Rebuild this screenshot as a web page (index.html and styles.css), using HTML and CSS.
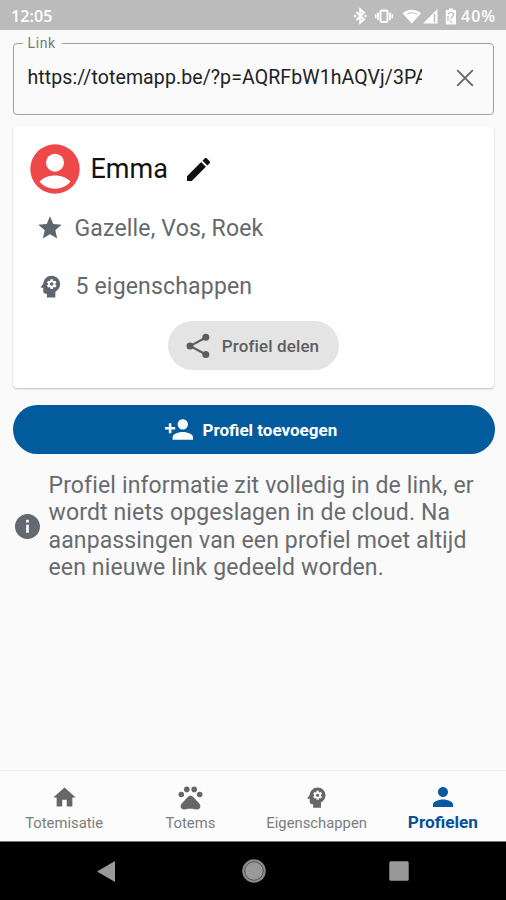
FILE: index.html
```html
<!DOCTYPE html>
<html lang="nl">
<head>
<meta charset="utf-8">
<title>Totemapp</title>
<link rel="stylesheet" href="styles.css">
</head>
<body>
<svg class="defs" aria-hidden="true">
  <symbol id="mind" viewBox="0 0 24 24"><path d="M13 8.57c-.79 0-1.43.64-1.43 1.43s.64 1.43 1.43 1.43 1.43-.64 1.43-1.43-.64-1.43-1.43-1.43z"/><path d="M13 3C9.25 3 6.2 5.94 6.02 9.64L4.1 12.2c-.25.33-.01.8.4.8H6v3c0 1.1.9 2 2 2h1v3h7v-4.68c2.36-1.12 4-3.53 4-6.32 0-3.87-3.13-7-7-7zm3 7c0 .13-.01.26-.02.39l.83.66c.08.06.1.16.05.25l-.8 1.39c-.05.09-.16.12-.24.09l-.99-.4c-.21.16-.43.29-.67.39L14 13.83c-.01.1-.1.17-.2.17h-1.6c-.1 0-.18-.07-.2-.17l-.15-1.06c-.25-.1-.47-.23-.68-.39l-.99.4c-.09.03-.2 0-.25-.09l-.8-1.39c-.05-.08-.03-.19.05-.25l.84-.66c-.01-.13-.02-.26-.02-.39s.02-.27.04-.39l-.85-.66c-.08-.06-.1-.16-.05-.26l.8-1.38c.05-.09.15-.12.24-.09l1 .4c.2-.15.43-.29.67-.39L12 6.17c.02-.1.1-.17.2-.17h1.6c.1 0 .18.07.2.17l.15 1.06c.24.1.46.23.67.39l1-.4c.09-.03.2 0 .24.09l.8 1.38c.05.09.03.2-.05.26l-.85.66c.03.12.04.25.04.39z"/></symbol>
</svg>
<header class="status">
  <span class="clock">12:05</span>
  <svg class="status-icons" viewBox="0 0 104 20" width="104" height="20">
    <path d="M3.500 6l7.500 7.500-3.800 3.200V3.300L11 6.500 3.500 14" fill="none" stroke="#fff" stroke-width="1.900"/>
    <circle cx="2" cy="10" r="1.300"/><circle cx="12.500" cy="10" r="1.300"/>
    <rect x="27.500" y="4.500" width="7" height="11.500" rx="1" fill="none" stroke="#fff" stroke-width="1.900"/>
    <path d="M25 6.500v7.500M37 6.500v7.500M22.700 8.300v4M39.300 8.300v4" stroke="#fff" stroke-width="1.700"/>
    <path d="M49.500 7.300C54.500 2.500 63 2.500 68 7.300L58.800 17.500z"/>
    <path d="M53.500 8.300c3-2 7.500-2 10.500 0" fill="none" stroke="#bbb" stroke-width="1"/>
    <path d="M70 17.500L84.500 3v14.500z"/><path d="M81.500 8v8.500" stroke="#bbb" stroke-width="1.500"/>
    <path d="M96 2.500h4V4h3v14.500H92.800V4H96z"/>
    <path d="M95.500 8.500c.3-3 5-3 5 0 0 2-2.300 2-2.500 4.500M98 14.500V17M95 10v5" fill="none" stroke="#bbb" stroke-width="1.200"/>
  </svg>
  <span class="battery">40%</span>
</header>
<main class="page">
  <fieldset class="link-field">
    <legend>Link</legend>
    <span class="url">https://totemapp.be/?p=AQRFbW1hAQVj/3PA</span>
    <svg class="clear" viewBox="0 0 18 18" width="18" height="18"><path d="M1.200 1.200l15.600 15.600M16.800 1.200L1.200 16.800" fill="none" stroke="#686868" stroke-width="1.900"/></svg>
  </fieldset>
  <section class="card">
    <div class="person">
      <svg viewBox="0 0 50 50" width="50" height="50"><circle cx="25" cy="25" r="24.700" fill="#ef484b"/><circle cx="25" cy="18.700" r="9" fill="#fff"/><path d="M9.700 37.500C17 29.500 33 29.500 40.300 37.500 34.500 47 15.500 47 9.700 37.500z" fill="#fff"/></svg>
      <h1>Emma</h1>
      <svg class="pencil" viewBox="3 3 18 18" width="23" height="23"><path d="M3 17.250V21h3.750L17.810 9.940l-3.750-3.750L3 17.250zM20.710 7.040c.39-.39.39-1.020 0-1.410l-2.340-2.340c-.39-.39-1.020-.39-1.410 0l-1.830 1.830 3.750 3.750 1.830-1.830z"/></svg>
    </div>
    <div class="fact">
      <svg viewBox="0 0 24 24" width="28" height="28"><path d="M12 17.270L18.180 21l-1.640-7.030L22 9.240l-7.190-.61L12 2 9.190 8.630 2 9.240l5.460 4.730L5.820 21z"/></svg>
      <span>Gazelle, Vos, Roek</span>
    </div>
    <div class="fact second">
      <svg viewBox="0 0 24 24" width="29" height="29"><use href="#mind"/></svg>
      <span>5 eigenschappen</span>
    </div>
    <button class="share">
      <svg viewBox="0 0 24 26" width="24" height="26"><path d="M20 4.500L4 13l16 8.500" fill="none" stroke="#5c5e60" stroke-width="2"/><circle cx="19.800" cy="4.300" r="3.500"/><circle cx="4" cy="13" r="3.500"/><circle cx="19.800" cy="21.600" r="3.500"/></svg>
      <span>Profiel delen</span>
    </button>
  </section>
  <button class="add">
    <svg viewBox="1 4 22 16" width="28" height="21"><path d="M15 12c2.210 0 4-1.790 4-4s-1.790-4-4-4-4 1.790-4 4 1.790 4 4 4zm-9-2V7H4v3H1v2h3v3h2v-3h3v-2H6zm9 4c-2.670 0-8 1.340-8 4v2h16v-2c0-2.660-5.330-4-8-4z"/></svg>
    <span>Profiel toevoegen</span>
  </button>
  <div class="info">
    <svg viewBox="2 2 20 20" width="25" height="25"><path d="M12 2C6.480 2 2 6.480 2 12s4.480 10 10 10 10-4.480 10-10S17.520 2 12 2zm1.100 15h-2.200v-6.500h2.200V17zm0-8.200h-2.200V6.600h2.200v2.200z"/></svg>
    <p>Profiel informatie zit volledig in de link, er<br>wordt niets opgeslagen in de cloud. Na<br>aanpassingen van een profiel moet altijd<br>een nieuwe link gedeeld worden.</p>
  </div>
</main>
<nav class="tabs">
  <a class="tab"><svg viewBox="0 0 24 24" width="27" height="27"><path d="M10 20v-6h4v6h5v-8h3L12 3 2 12h3v8z"/></svg><span>Totemisatie</span></a>
  <a class="tab"><svg viewBox="0 0 27 27" width="27" height="27"><circle cx="4.300" cy="10.500" r="2.800"/><circle cx="9.800" cy="5.400" r="2.800"/><circle cx="17.200" cy="5.400" r="2.800"/><circle cx="22.700" cy="10.500" r="2.800"/><path d="M10.700 13c1.800-2 3.800-2 5.600 0 1.700 2 3.700 4 5.600 6 2.900 3.100 1.200 6.700-2.300 6.500-2.100-.1-3.200-.7-6.100-.7s-4 .6-6.100.7c-3.500.2-5.200-3.400-2.300-6.500 1.900-2 3.900-4 5.600-6z"/></svg><span>Totems</span></a>
  <a class="tab"><svg viewBox="0 0 24 24" width="29" height="29"><use href="#mind"/></svg><span>Eigenschappen</span></a>
  <a class="tab active"><svg viewBox="4 4 16 16" width="20" height="20"><path d="M12 12c2.210 0 4-1.790 4-4s-1.790-4-4-4-4 1.790-4 4 1.790 4 4 4zm0 2c-2.670 0-8 1.340-8 4v2h16v-2c0-2.660-5.330-4-8-4z"/></svg><span>Profielen</span></a>
</nav>
<footer class="system">
  <svg viewBox="0 0 18 21" width="18" height="21"><path d="M18 0v21L0 10.500z"/></svg>
  <svg class="circle" viewBox="0 0 24 24" width="24" height="24"><circle cx="12" cy="12" r="11" fill="#999" stroke="#888" stroke-width="1.500"/><circle cx="12" cy="12" r="9.300" fill="none" stroke="#444" stroke-width=".9"/></svg>
  <svg viewBox="0 0 20 20" width="20" height="20"><rect x=".3" y=".3" width="19.400" height="19.400" rx="1.500"/></svg>
</footer>
</body>
</html>
```

FILE: styles.css
```css
* { box-sizing: border-box; }
body {
  margin: 0;
  width: 506px;
  height: 900px;
  display: flex;
  flex-direction: column;
  overflow: hidden;
  background: #fafafa;
  font-family: Roboto, sans-serif;
}
svg { display: block; flex: none; }
.defs { position: absolute; width: 0; height: 0; }
button { border: 0; font: inherit; }
span, legend, h1, p { white-space: nowrap; }

.status {
  height: 30px;
  flex: none;
  display: flex;
  align-items: center;
  padding: 2px 8px 0 11px;
  background: #bbb;
  color: #fff;
  font-family: "Open Sans", sans-serif;
  font-weight: 600;
}
.clock { font-size: 16px; letter-spacing: .1px; }
.status-icons { margin-left: auto; fill: #fff; }
.battery { width: 37px; margin-left: 4px; font-size: 16px; letter-spacing: 1px; }

.page { flex: 1; padding: 5px 12px 0 12.500px; }
.link-field {
  height: 79.500px;
  margin: 0;
  padding: 0 19px 9px 14px;
  border: 1px solid #a0a0a0;
  border-radius: 4px;
  display: flex;
  align-items: center;
  justify-content: space-between;
}
.link-field legend {
  margin-left: -5px;
  padding: 0 6px 0 5px;
  color: #777;
  font-size: 14px;
  line-height: 16px;
  letter-spacing: .6px;
}
.url {
  width: 394px;
  overflow: hidden;
  color: #222;
  font-size: 19.500px;
  line-height: 28px;
  letter-spacing: .1px;
}

.card {
  height: 262px;
  margin-top: 11.500px;
  padding: 18px 17px 0;
  border-radius: 4px;
  background: #fff;
  box-shadow: 0 1px 2px rgba(0, 0, 0, .24);
}
.person { display: flex; align-items: center; height: 50px; }
.person h1 {
  width: 77px;
  margin: 0 0 0 11px;
  font-size: 27px;
  font-weight: 400;
  color: #111;
}
.pencil { margin-left: 19px; fill: #111; }
.fact {
  height: 30px;
  margin-top: 19px;
  padding-left: 6px;
  display: flex;
  align-items: center;
  gap: 11px;
  color: #65686c;
  fill: #5e656f;
  font-size: 23px;
  letter-spacing: .18px;
}
.fact.second { margin-top: 28px; }
.share {
  width: 171px;
  height: 49px;
  margin: 20px auto 0;
  padding: 0 0 0 18px;
  border-radius: 25px;
  display: flex;
  align-items: center;
  gap: 12px;
  background: #e4e4e4;
  color: #5c5e60;
  fill: #5c5e60;
  font-size: 17px;
  font-weight: 500;
  letter-spacing: .12px;
}
.add {
  width: 482px;
  height: 49px;
  margin-top: 17px;
  padding: 0 0 0 152px;
  border-radius: 25px;
  display: flex;
  align-items: center;
  gap: 10px;
  background: #015b9d;
  color: #fff;
  fill: #fff;
  font-size: 17px;
  font-weight: 700;
}
.info {
  margin-top: 18px;
  padding-left: 2px;
  display: flex;
  align-items: center;
  gap: 9px;
  color: #686b6f;
  fill: #626970;
}
.info p { margin: 0; font-size: 23px; line-height: 27.300px; letter-spacing: .14px; }

.tabs {
  height: 71px;
  flex: none;
  display: grid;
  grid-template-columns: repeat(4, 1fr);
  padding-left: 1px;
  border-top: 1px solid #eee;
  background: #fcfcfc;
}
.tab {
  display: flex;
  flex-direction: column;
  align-items: center;
  padding-top: 13px;
  color: #7b7b7b;
  fill: #666;
  font-size: 14.800px;
}
.tab svg { height: 27px; }
.tab span { line-height: 20px; margin-top: 2px; }
.tab.active { padding-top: 12px; color: #08509a; fill: #08599e; font-size: 17.200px; font-weight: 700; }
.tab.active svg { height: 20px; margin: 4px 0 3px; }
.tab.active span { margin-top: 2px; }

.system {
  height: 59px;
  flex: none;
  padding: 0 97px;
  border-top: 1px solid #777;
  display: flex;
  align-items: center;
  justify-content: space-between;
  background: #000;
  fill: #999;
}
.circle { margin-left: 3px; }
```
